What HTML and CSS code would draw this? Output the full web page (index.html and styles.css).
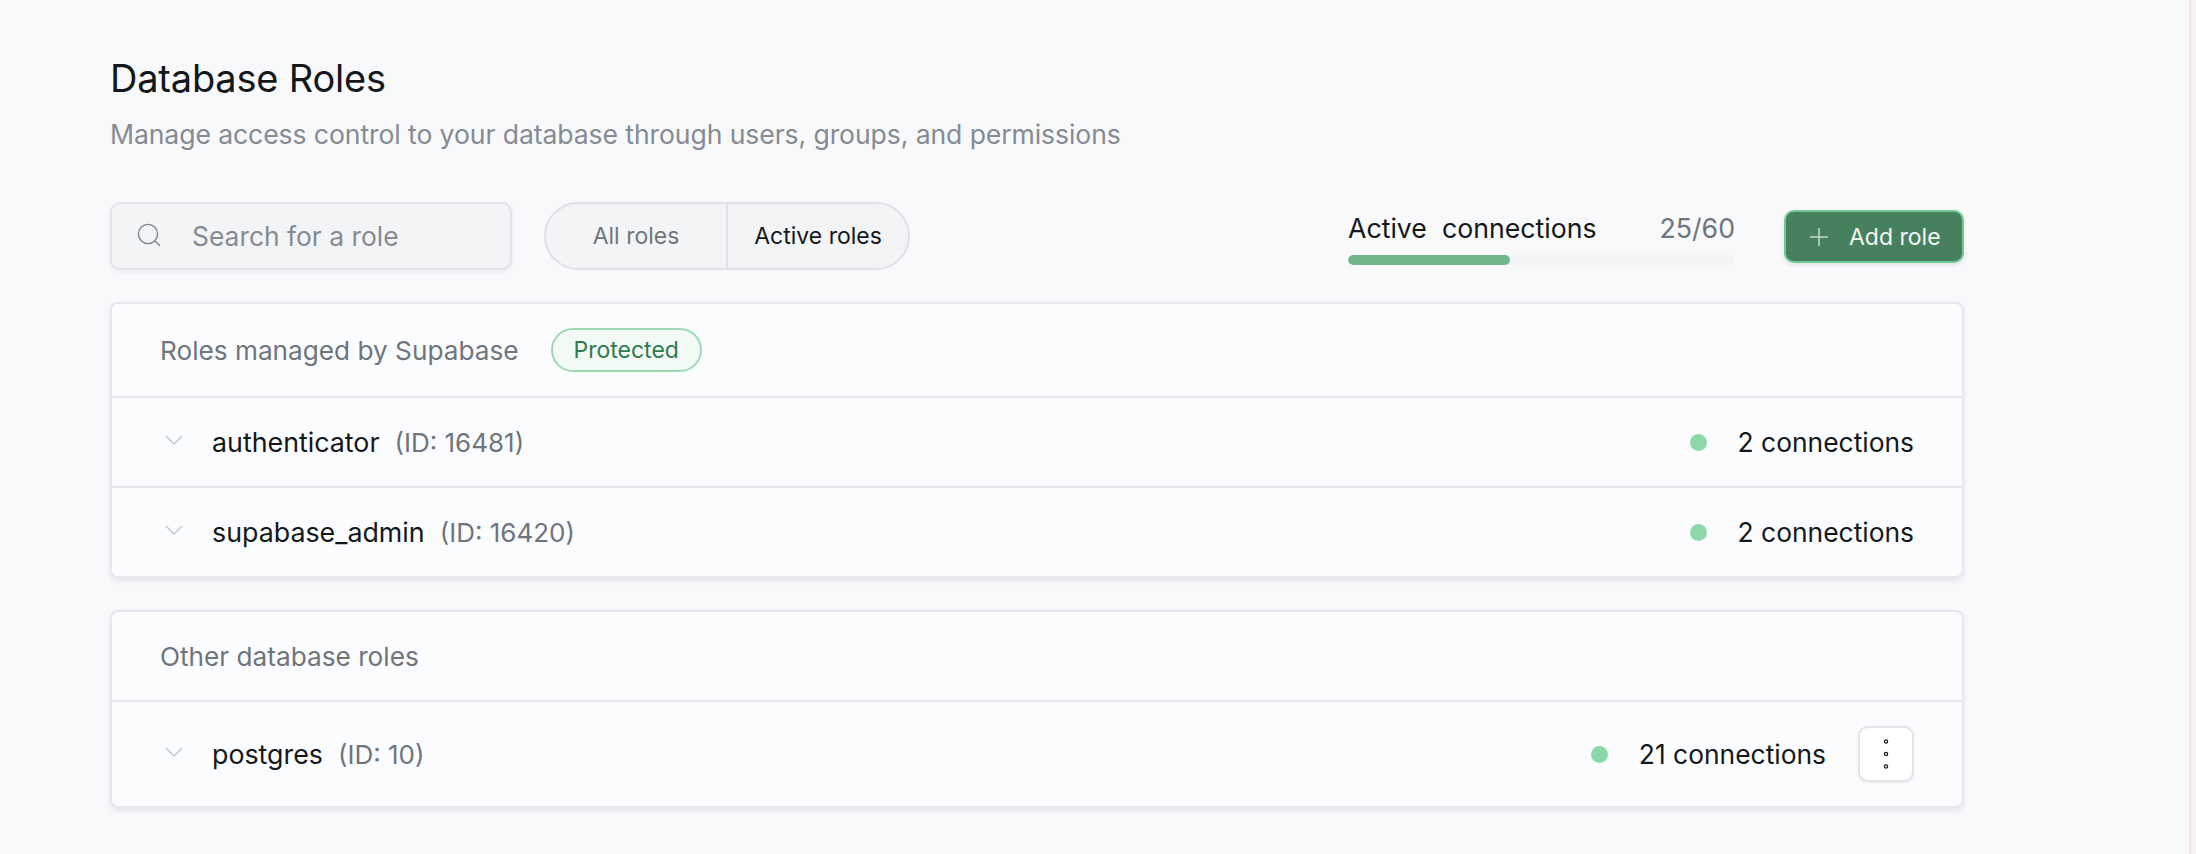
FILE: index.html
```html
<!DOCTYPE html>
<html lang="en">
<head>
<meta charset="utf-8">
<title>Database Roles</title>
<link rel="stylesheet" href="styles.css">
</head>
<body>
<div class="page">
  <main class="content">
    <h1 class="title">Database Roles</h1>
    <p class="subtitle">Manage access control to your database through users, groups, and permissions</p>
    <div class="toolbar">
      <div class="search">
        <svg class="search-icon" width="28" height="28" viewBox="0 0 28 28" fill="none" stroke="#7e858c" stroke-width="1.4"><circle cx="12" cy="12" r="9.6"/><path d="M19 19l5 5"/></svg>
        <span class="search-text">Search for a role</span>
      </div>
      <div class="segment">
        <span class="seg seg-all">All roles</span>
        <span class="seg seg-active">Active roles</span>
      </div>
      <div class="usage">
        <div class="usage-top"><span class="usage-label">Active&nbsp; connections</span><span class="usage-count">25/60</span></div>
        <div class="usage-track"><div class="usage-fill"></div></div>
      </div>
      <button class="add">
        <svg width="22" height="22" viewBox="0 0 22 22" fill="none" stroke="#c5d9cc" stroke-width="1.5"><path d="M11 2v18M2 11h18"/></svg>
        <span>Add role</span>
      </button>
    </div>
    <section class="card">
      <header class="card-head">
        <span class="head-text">Roles managed by Supabase</span>
        <span class="badge">Protected</span>
      </header>
      <div class="rows">
        <div class="row">
          <svg class="chev" width="22" height="14" viewBox="0 0 22 14" fill="none" stroke="#c4c8cb" stroke-width="1.5"><path d="M3 3l8 8 8-8"/></svg>
          <span class="name">authenticator</span><span class="id">(ID: 16481)</span>
          <span class="dot"></span><span class="conn">2 connections</span>
        </div>
        <div class="row">
          <svg class="chev" width="22" height="14" viewBox="0 0 22 14" fill="none" stroke="#c4c8cb" stroke-width="1.5"><path d="M3 3l8 8 8-8"/></svg>
          <span class="name">supabase_admin</span><span class="id">(ID: 16420)</span>
          <span class="dot"></span><span class="conn">2 connections</span>
        </div>
      </div>
    </section>
    <section class="card card-other">
      <header class="card-head">
        <span class="head-text">Other database roles</span>
      </header>
      <div class="rows">
        <div class="row row-last">
          <svg class="chev" width="22" height="14" viewBox="0 0 22 14" fill="none" stroke="#c4c8cb" stroke-width="1.5"><path d="M3 3l8 8 8-8"/></svg>
          <span class="name">postgres</span><span class="id">(ID: 10)</span>
          <span class="dot"></span><span class="conn">21 connections</span>
          <button class="more">
            <svg width="8" height="32" viewBox="0 0 8 32" fill="none" stroke="#1a1e22" stroke-width="1.3"><circle cx="4" cy="3.5" r="1.6"/><circle cx="4" cy="16" r="1.6"/><circle cx="4" cy="28.5" r="1.6"/></svg>
          </button>
        </div>
      </div>
    </section>
  </main>
  <div class="edge"></div>
</div>
</body>
</html>
```
FILE: styles.css
```css
* { box-sizing: border-box; }
html, body { margin: 0; height: 100%; }
body {
  background: #f8f9fb;
  color: #171a1d;
  font-family: Inter, "Liberation Sans", sans-serif;
  overflow: hidden;
}
.page { display: flex; height: 854px; }
.content { width: 2189px; padding: 56px 0 0 110px; }
.edge { width: 7px; background: #f6f1f2; border-left: 2px solid #efe3e3; }
.title {
  margin: 0;
  font-size: 38px;
  line-height: 44px;
  font-weight: 400;
  letter-spacing: -0.2px;
  color: #15181b;
}
.subtitle {
  margin: 17px 0 0;
  font-size: 26.6px;
  line-height: 34px;
  color: #858b92;
  letter-spacing: -0.1px;
}
.toolbar { display: flex; align-items: flex-start; margin-top: 51px; width: 1854px; }
.search {
  display: flex;
  align-items: center;
  width: 402px;
  height: 68px;
  padding-left: 24px;
  background: #f3f4f6;
  border: 2px solid #e2e4e7;
  border-radius: 10px;
  box-shadow: 0 2px 4px rgba(30, 40, 50, .06);
}
.search-text { margin-left: 28px; font-size: 26.4px; color: #858b92; }
.segment {
  display: flex;
  margin-left: 32px;
  width: 366px;
  height: 68px;
  background: #f3f4f6;
  border: 2px solid #dfe1e4;
  border-radius: 34px;
  overflow: hidden;
}
.seg { display: flex; align-items: center; justify-content: center; font-size: 23px; }
.seg-all { width: 182px; color: #70767c; border-right: 2px solid #dfe1e4; }
.seg-active { flex: 1; color: #15181b; }
.usage { width: 387px; margin: 9px 0 0 auto; }
.usage-top { display: flex; justify-content: space-between; font-size: 26.7px; line-height: 34px; }
.usage-label { color: #15181b; }
.usage-count { color: #6f757c; }
.usage-track { height: 10px; margin-top: 10px; background: #f3f4f6; border-radius: 5px; overflow: hidden; }
.usage-fill { width: 162px; height: 100%; background: #6fb68a; border-radius: 5px; }
.add {
  display: flex;
  align-items: center;
  gap: 19px;
  width: 180px;
  height: 53px;
  margin: 8px 0 0 49px;
  padding: 0 0 0 22px;
  background: #47805e;
  border: 2px solid #6fca90;
  border-radius: 10px;
  color: #f4f8f5;
  font: inherit;
  font-size: 23px;
  box-shadow: 0 2px 4px rgba(30, 40, 50, .1);
}
.card {
  width: 1854px;
  margin-top: 32px;
  background: #fbfcfe;
  border: 2px solid #e7e8eb;
  border-radius: 8px;
  box-shadow: 0 3px 5px rgba(30, 40, 50, .09);
}
.card-other { margin-top: 32px; }
.card-head {
  display: flex;
  align-items: center;
  height: 92px;
  padding-left: 48px;
  gap: 32px;
  font-size: 26.2px;
  color: #6f757c;
}
.card-other .card-head { height: 88px; }
.badge {
  display: flex;
  align-items: center;
  height: 44px;
  padding: 0 21px;
  font-size: 23px;
  color: #2f7a4f;
  background: #f2faf5;
  border: 2px solid #9fd9b3;
  border-radius: 22px;
}
.row {
  display: flex;
  align-items: center;
  height: 90px;
  padding: 0 48px 0 51px;
  border-top: 2px solid #e5e6e9;
  font-size: 26.4px;
}
.row-last { height: 106px; }
.chev { margin-top: -4px; }
.name { margin-left: 27px; font-size: 26.8px; color: #15181b; }
.id { margin-left: 15px; font-size: 26px; color: #6f757c; }
.dot { width: 17px; height: 17px; margin: 0 31px 0 auto; border-radius: 50%; background: #8dd8a8; }
.conn { color: #15181b; }
.more {
  display: flex;
  align-items: center;
  justify-content: center;
  width: 56px;
  height: 56px;
  margin-left: 32px;
  padding: 0;
  background: #fff;
  border: 2px solid #e3e4e7;
  border-radius: 10px;
  box-shadow: 0 1px 3px rgba(30, 40, 50, .08);
}
```
